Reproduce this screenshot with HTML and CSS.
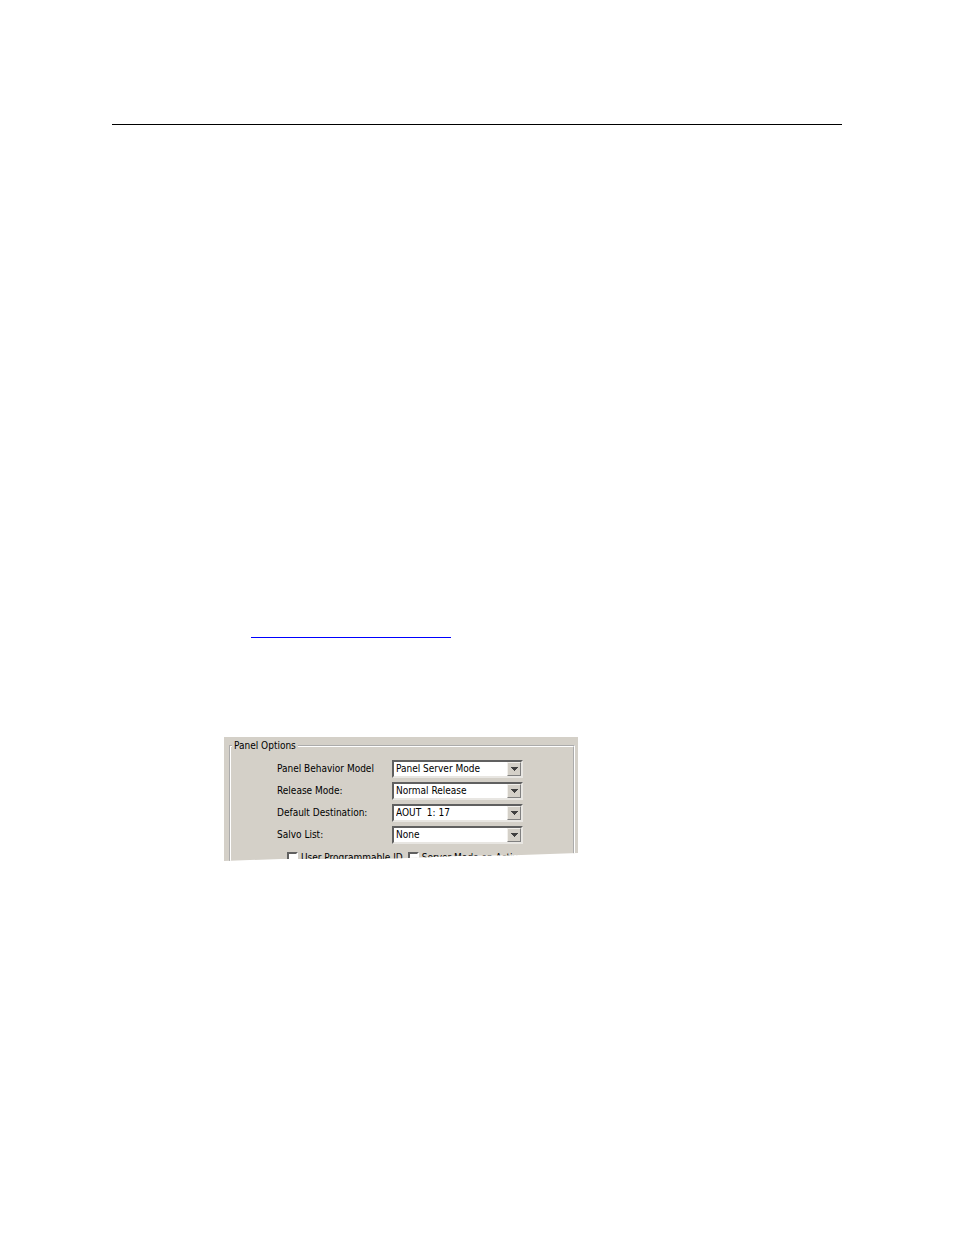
FILE: index.html
```html
<!DOCTYPE html>
<html lang="en">
<head>
<meta charset="utf-8">
<title>Panel Options</title>
<link rel="stylesheet" href="styles.css">
</head>
<body>
<main class="page">
  <hr class="header-rule">
  <hr class="link-rule">
  <form class="panel">
    <fieldset class="group">
      <legend class="group-title">Panel Options</legend>
      <div class="row">
        <label for="model">Panel Behavior Model</label>
        <span class="combo"><select id="model"><option>Panel Server Mode</option></select><svg class="arrow" viewBox="0 0 12 12" aria-hidden="true"><path d="M3 4h7v1h-1v1h-1v1h-1v1h-1v-1h-1v-1h-1v-1h-1z"/></svg></span>
      </div>
      <div class="row">
        <label for="release">Release Mode:</label>
        <span class="combo"><select id="release"><option>Normal Release</option></select><svg class="arrow" viewBox="0 0 12 12" aria-hidden="true"><path d="M3 4h7v1h-1v1h-1v1h-1v1h-1v-1h-1v-1h-1v-1h-1z"/></svg></span>
      </div>
      <div class="row">
        <label for="destination">Default Destination:</label>
        <span class="combo"><select id="destination"><option>AOUT&nbsp; 1: 17</option></select><svg class="arrow" viewBox="0 0 12 12" aria-hidden="true"><path d="M3 4h7v1h-1v1h-1v1h-1v1h-1v-1h-1v-1h-1v-1h-1z"/></svg></span>
      </div>
      <div class="row">
        <label for="salvo">Salvo List:</label>
        <span class="combo"><select id="salvo"><option>None</option></select><svg class="arrow" viewBox="0 0 12 12" aria-hidden="true"><path d="M3 4h7v1h-1v1h-1v1h-1v1h-1v-1h-1v-1h-1v-1h-1z"/></svg></span>
      </div>
      <div class="checks">
        <label class="check"><input type="checkbox">User Programmable ID</label>
        <label class="check"><input type="checkbox">Server Mode on Active</label>
      </div>
    </fieldset>
  </form>
</main>
</body>
</html>
```
FILE: styles.css
```css
* { box-sizing: border-box; }
body { margin: 0; background: #fff; }
.page { padding: 124px 112px 0; }
hr { margin: 0; border: 0; height: 1px; }
.header-rule { background: #000; }
.link-rule { width: 200px; margin: 512px 0 0 139px; background: #00f; }
.panel {
  max-width: 354px;
  margin: 99px 0 0 112px;
  padding: 2px 3px 0 5px;
  background: #d4d0c8;
  clip-path: polygon(0 0, 100% 0, 100% 116px, 84% 118px, 66% 119px, 52% 121px, 44% 122px, 16% 122px, 0 124px);
  font: 10px/14px "DejaVu Sans Condensed", "DejaVu Sans", sans-serif;
  color: #000;
}
.group {
  min-width: 0;
  margin: 0;
  padding: 7px 0 5px 46px;
  border: 2px groove #fff;
  border-bottom: 0;
}
.group-title { margin-left: -45px; padding: 0 2px; }
.row { display: flex; align-items: center; height: 18px; margin-bottom: 4px; }
.row label { width: 115px; }
.combo { position: relative; width: 131px; height: 18px; }
.combo select {
  display: block;
  width: 100%;
  height: 100%;
  padding: 0 16px 0 2px;
  border: 2px solid;
  border-color: #606060 #e8e6e2 #e8e6e2 #606060;
  border-radius: 0;
  background: #fff;
  color: #000;
  font: inherit;
  appearance: none;
}
.arrow {
  position: absolute;
  top: 2px;
  right: 2px;
  width: 14px;
  height: 14px;
  border: 1px solid;
  border-color: #f2f0ec #808080 #808080 #f2f0ec;
  background: #d4d0c8;
  fill: #404040;
  pointer-events: none;
}
.checks { display: flex; gap: 5px; padding: 4px 0 0 10px; line-height: 12px; }
.check { display: flex; align-items: flex-start; gap: 3px; white-space: nowrap; }
.check input {
  width: 11px;
  height: 12px;
  margin: 0;
  border: 2px solid;
  border-color: #606060 #fff #fff #606060;
  background: #fff;
  appearance: none;
}
```
